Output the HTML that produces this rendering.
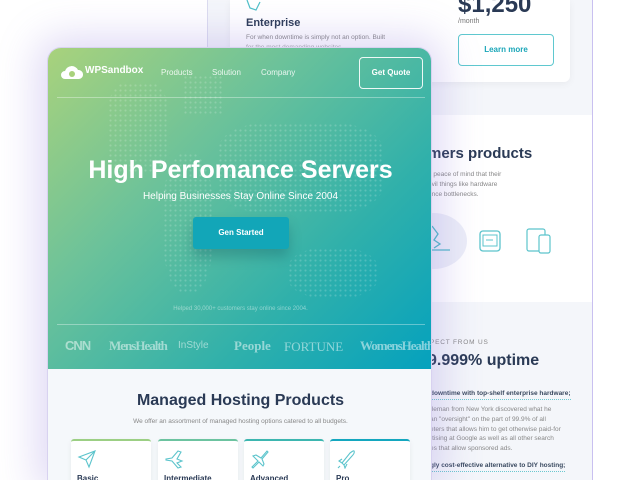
<!DOCTYPE html>
<html><head><meta charset="utf-8"><style>
*{margin:0;padding:0;box-sizing:border-box}
html,body{width:640px;height:480px;overflow:hidden}
body{background:#fff;font-family:"Liberation Sans",sans-serif;position:relative}
.abs{position:absolute}
.back{left:207px;top:0;width:386px;height:480px;background:#f4f6fa;border-left:1px solid #dcdcef;border-right:1px solid #c9c0f0}
.card1{left:230px;top:0;width:340px;height:82px;background:#fff;border-radius:0 0 6px 6px;box-shadow:0 2px 8px rgba(0,0,0,.05)}
.sec2{left:207px;top:115px;width:385px;height:187px;background:#fff}
.front{left:47px;top:47px;width:385px;height:433px;border-radius:14px 14px 0 0;overflow:hidden;background:#f5f8fb;box-shadow:0 0 40px 10px rgba(140,120,220,.28);border:1px solid #d8d2f0;border-bottom:none}
.hero{position:absolute;left:0;top:0;width:385px;height:321px;background:linear-gradient(135deg,#a9d27c 0%,#6cc29a 35%,#2fb0ab 70%,#04a1be 100%)}
.t{position:absolute;white-space:nowrap}
.dots{position:absolute;background-image:radial-gradient(circle,rgba(255,255,255,.18) 0.9px,transparent 1.2px);background-size:5px 5px}
.pc{position:absolute;top:391px;width:80px;height:60px;background:#fff;border-radius:3px;box-shadow:0 2px 6px rgba(0,0,0,.06)}
</style></head><body>
<div class="abs back"></div>
<div class="abs card1"></div>
<svg class="abs" style="left:244px;top:0" width="22" height="12"><path d="M3 0 L6 8 L12 10 L16 2" fill="none" stroke="#4fc0c8" stroke-width="1.2"/></svg>
<div class="t" style="left:246px;top:17px;font-size:11px;font-weight:bold;color:#2a3a55">Enterprise</div>
<div class="t" style="left:246px;top:34px;font-size:6.5px;color:#888">For when downtime is simply not an option. Built</div>
<div class="t" style="left:246px;top:44px;font-size:6.5px;color:#aaa">for the most demanding websites</div>
<div class="t" style="left:458px;top:-9px;font-size:24px;font-weight:bold;color:#2a3a55">$1,250</div>
<div class="t" style="left:458px;top:18px;font-size:7px;color:#777">/month</div>
<div class="abs" style="left:458px;top:34px;width:96px;height:32px;border:1.5px solid #5fc8cf;border-radius:4px;color:#1aa6b8;font-size:8px;font-weight:bold;text-align:center;line-height:29px">Learn more</div>
<div class="abs sec2"></div>
<div class="t" style="left:428px;top:145px;font-size:15px;font-weight:bold;color:#2a3a55">mers products</div>
<div class="t" style="left:428px;top:170px;font-size:6.5px;color:#888;line-height:10px">e peace of mind that their<br>evil things like hardware<br>ance bottlenecks.</div>
<div class="abs" style="left:400px;top:213px;width:67px;height:56px;border-radius:50%;background:#eceef8"></div>
<svg class="abs" style="left:428px;top:224px" width="24" height="30"><path d="M4 2 L10 10 L6 16 L12 20 L6 24 M2 26 H22" fill="none" stroke="#4fb8c8" stroke-width="1.3"/></svg>
<svg class="abs" style="left:478px;top:229px" width="24" height="24"><rect x="2" y="2" width="20" height="20" rx="3" fill="none" stroke="#5cc4cc" stroke-width="1.3"/><rect x="5" y="6" width="14" height="11" fill="none" stroke="#5cc4cc"/><path d="M8 11 H15" stroke="#5cc4cc"/></svg>
<svg class="abs" style="left:526px;top:227px" width="26" height="28"><rect x="1" y="2" width="18" height="22" rx="2" fill="none" stroke="#5cc4cc" stroke-width="1.2"/><rect x="13" y="8" width="11" height="18" rx="2" fill="#fff" stroke="#5cc4cc" stroke-width="1.2"/></svg>
<div class="t" style="left:430px;top:339px;font-size:6.5px;color:#888;letter-spacing:.8px">PECT FROM US</div>
<div class="t" style="left:428px;top:352px;font-size:16px;font-weight:bold;color:#2a3a55">9.999% uptime</div>
<div class="t" style="left:430px;top:390px;font-size:6.5px;font-weight:bold;color:#3a4a60;border-bottom:1.5px dotted #6cc8d0;padding-bottom:2px">downtime with top-shelf enterprise hardware;</div>
<div class="t" style="left:430px;top:405px;font-size:6.5px;color:#888;line-height:9.8px">tleman from New York discovered what he<br>an "oversight" on the part of 99.9% of all<br>eters that allows him to get otherwise paid-for<br>rtising at Google as well as all other search<br>es that allow sponsored ads.</div>
<div class="t" style="left:430px;top:462px;font-size:6.5px;font-weight:bold;color:#3a4a60;border-bottom:1.5px dotted #6cc8d0;padding-bottom:2px">gly cost-effective alternative to DIY hosting;</div>

<div class="abs front">
<div class="hero">
<div class="dots" style="left:60px;top:35px;width:60px;height:90px;border-radius:30%"></div>
<div class="dots" style="left:135px;top:27px;width:40px;height:40px"></div>
<div class="dots" style="left:170px;top:75px;width:165px;height:90px;border-radius:30%"></div>
<div class="dots" style="left:115px;top:105px;width:50px;height:140px;border-radius:40%"></div>
<div class="dots" style="left:240px;top:200px;width:90px;height:50px;border-radius:40%"></div>
<svg class="abs" style="left:13px;top:15px" width="22" height="17"><path d="M4 16 A4 4 0 0 1 4 8 A7 7 0 0 1 17 7 A4.5 4.5 0 0 1 18 16 Z" fill="#fff"/><circle cx="11" cy="11" r="3" fill="#a9d27c"/></svg>
<div class="t" style="left:37px;top:17px;font-size:10px;font-weight:bold;color:#fff">WPSandbox</div>
<div class="t" style="left:113px;top:20px;font-size:8px;color:rgba(255,255,255,.85)">Products</div>
<div class="t" style="left:164px;top:20px;font-size:8px;color:rgba(255,255,255,.85)">Solution</div>
<div class="t" style="left:213px;top:20px;font-size:8px;color:rgba(255,255,255,.85)">Company</div>
<div class="abs" style="left:311px;top:9px;width:64px;height:32px;border:1.3px solid rgba(255,255,255,.9);border-radius:4px;color:#fff;font-size:8px;font-weight:bold;text-align:center;line-height:29px">Get Quote</div>
<div class="abs" style="left:9px;top:49px;width:368px;height:1px;background:rgba(255,255,255,.35)"></div>
<div class="t" style="left:0;width:385px;text-align:center;top:108px;font-size:25px;font-weight:bold;color:#fff">High Perfomance Servers</div>
<div class="t" style="left:0;width:385px;text-align:center;top:143px;font-size:10px;color:#fff">Helping Businesses Stay Online Since 2004</div>
<div class="abs" style="left:145px;top:169px;width:96px;height:32px;background:#12a6b8;border-radius:3px;box-shadow:0 8px 12px rgba(0,60,80,.25);color:#fff;font-size:8px;font-weight:bold;text-align:center;line-height:32px">Gen Started</div>
<div class="t" style="left:0;width:385px;text-align:center;top:258px;font-size:6px;color:rgba(255,255,255,.45)">Helped 30,000+ customers stay online since 2004.</div>
<div class="abs" style="left:9px;top:276px;width:368px;height:1px;background:rgba(255,255,255,.35)"></div>
<div class="t" style="left:17px;top:290px;font-size:13px;font-weight:bold;color:rgba(255,255,255,.5);letter-spacing:-1px">CNN</div>
<div class="t" style="left:61px;top:290px;font-family:'Liberation Serif',serif;font-size:13px;font-weight:bold;color:rgba(255,255,255,.5);letter-spacing:-1px">MensHealth</div>
<div class="t" style="left:130px;top:292px;font-size:10px;color:rgba(255,255,255,.5)">InStyle</div>
<div class="t" style="left:186px;top:290px;font-family:'Liberation Serif',serif;font-size:13px;font-weight:bold;color:rgba(255,255,255,.5)">People</div>
<div class="t" style="left:236px;top:291px;font-family:'Liberation Serif',serif;font-size:13px;color:rgba(255,255,255,.5)">FORTUNE</div>
<div class="t" style="left:312px;top:290px;font-family:'Liberation Serif',serif;font-size:13px;font-weight:bold;color:rgba(255,255,255,.5);letter-spacing:-1px">WomensHealth</div>
</div>
<div class="t" style="left:0;width:385px;text-align:center;top:344px;font-size:16px;font-weight:bold;color:#2a3a55">Managed Hosting Products</div>
<div class="t" style="left:0;width:385px;text-align:center;top:370px;font-size:6.5px;color:#888">We offer an assortment of managed hosting options catered to all budgets.</div>
<div class="pc" style="left:23px;border-top:2px solid #9ccf84"><svg style="position:absolute;left:6px;top:8px" width="20" height="20"><path d="M2 8 L18 2 L12 18 L9 11 Z M9 11 L18 2" fill="none" stroke="#5cc4cc" stroke-width="1.1"/></svg><div class="t" style="left:6px;top:33px;font-size:8px;font-weight:bold;color:#2a3a55">Basic</div></div>
<div class="pc" style="left:110px;border-top:2px solid #6cc3a0"><svg style="position:absolute;left:6px;top:8px" width="20" height="20"><path d="M2 10 L8 9 L14 2 L17 3 L13 10 L18 12 L13 14 L17 18 L14 19 L8 12 L2 11 Z" fill="none" stroke="#5cc4cc" stroke-width="1.1"/></svg><div class="t" style="left:6px;top:33px;font-size:8px;font-weight:bold;color:#2a3a55">Intermediate</div></div>
<div class="pc" style="left:196px;border-top:2px solid #3db6b0"><svg style="position:absolute;left:6px;top:8px" width="20" height="20"><path d="M2 18 L8 12 L3 7 L6 6 L11 9 L17 2 L18 3 L12 10 L14 15 L13 17 L9 13 L3 19 Z" fill="none" stroke="#5cc4cc" stroke-width="1.1"/></svg><div class="t" style="left:6px;top:33px;font-size:8px;font-weight:bold;color:#2a3a55">Advanced</div></div>
<div class="pc" style="left:282px;border-top:2px solid #14a7bf"><svg style="position:absolute;left:6px;top:8px" width="20" height="20"><path d="M6 14 L14 4 Q18 1 18 2 Q19 4 16 7 L8 16 Z M6 14 L3 12 L6 10 M8 16 L9 19 L11 15 M4 17 L2 19" fill="none" stroke="#5cc4cc" stroke-width="1.1"/></svg><div class="t" style="left:6px;top:33px;font-size:8px;font-weight:bold;color:#2a3a55">Pro</div></div>
</div>
</body></html>
